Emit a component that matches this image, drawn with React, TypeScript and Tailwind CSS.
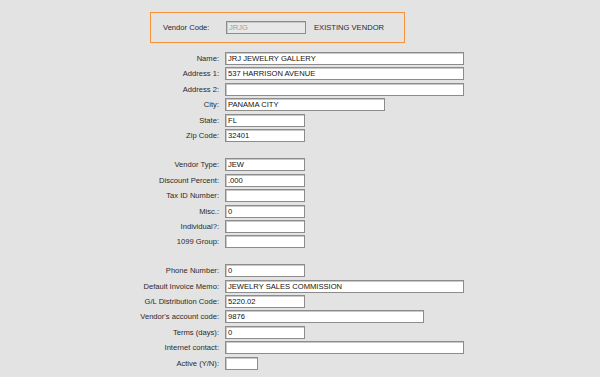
import React from "react";

type Row = { label: string; value: string; w: number };

const group1: Row[] = [
  { label: "Name:", value: "JRJ JEWELRY GALLERY", w: 239 },
  { label: "Address 1:", value: "537 HARRISON AVENUE", w: 239 },
  { label: "Address 2:", value: "", w: 239 },
  { label: "City:", value: "PANAMA CITY", w: 160 },
  { label: "State:", value: "FL", w: 80 },
  { label: "Zip Code:", value: "32401", w: 80 },
];

const group2: Row[] = [
  { label: "Vendor Type:", value: "JEW", w: 80 },
  { label: "Discount Percent:", value: ".000", w: 80 },
  { label: "Tax ID Number:", value: "", w: 80 },
  { label: "Misc.:", value: "0", w: 80 },
  { label: "Individual?:", value: "", w: 80 },
  { label: "1099 Group:", value: "", w: 80 },
];

const group3: Row[] = [
  { label: "Phone Number:", value: "0", w: 80 },
  { label: "Default Invoice Memo:", value: "JEWELRY SALES COMMISSION", w: 239 },
  { label: "G/L Distribution Code:", value: "5220.02", w: 80 },
  { label: "Vendor's account code:", value: "9876", w: 199 },
  { label: "Terms (days):", value: "0", w: 80 },
  { label: "Internet contact:", value: "", w: 239 },
  { label: "Active (Y/N):", value: "", w: 33 },
];

function Field({ row }: { row: Row }) {
  return (
    <div className="flex h-[15.4px] items-start">
      <div className="w-[121px] h-[13px] leading-[13px] text-right pr-[2px] whitespace-nowrap">
        {row.label}
      </div>
      <div
        className="ml-[4px] h-[13px] bg-white border border-[#8c8c8c] shadow-[inset_1px_1px_0_#c8c8c8] pl-[2px] leading-[11px] whitespace-nowrap overflow-hidden text-[#111]"
        style={{ width: row.w }}
      >
        {row.value}
      </div>
    </div>
  );
}

function Group({ rows, className }: { rows: Row[]; className?: string }) {
  return (
    <div className={className}>
      {rows.map((r) => (
        <Field key={r.label} row={r} />
      ))}
    </div>
  );
}

export default function App() {
  return (
    <div
      className="w-[600px] h-[377px] bg-[#e3e3e3] pt-[12px] text-[7.6px] text-[#2a2a2a] overflow-hidden"
      style={{ fontFamily: '"Liberation Sans", Arial, sans-serif' }}
    >
      <div className="ml-[150px] w-[255px] h-[31px] border border-[#f7923a] flex items-center">
        <div className="pl-[12px] w-[75px] whitespace-nowrap">Vendor Code:</div>
        <div className="w-[80px] h-[13px] bg-[#e8e8e8] border border-[#8c8c8c] shadow-[inset_1px_1px_0_#c8c8c8] pl-[2px] leading-[11px] text-[#a0a0a0]">
          JRJG
        </div>
        <div className="ml-[8px] whitespace-nowrap">EXISTING VENDOR</div>
      </div>
      <div className="ml-[100px] mt-[9px]">
        <Group rows={group1} />
        <Group rows={group2} className="mt-[14px]" />
        <Group rows={group3} className="mt-[13.6px]" />
      </div>
    </div>
  );
}
